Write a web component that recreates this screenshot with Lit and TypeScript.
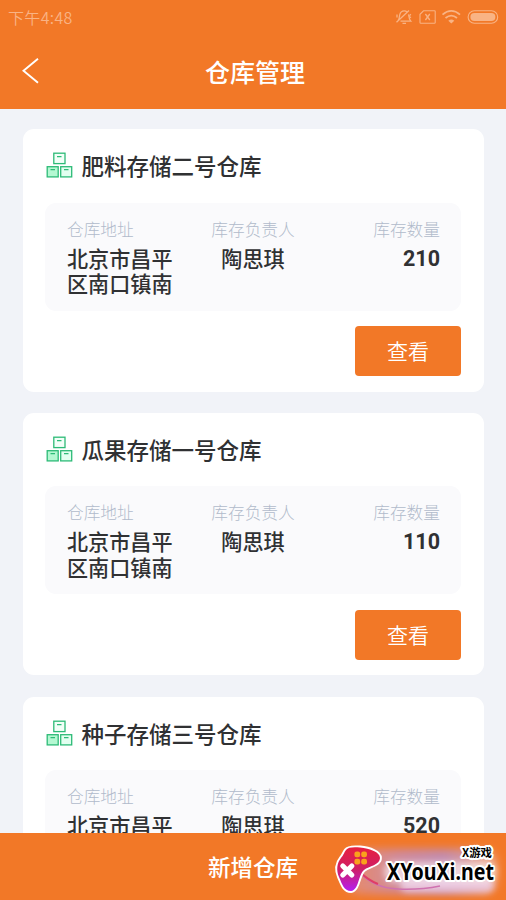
import { LitElement, html, css } from "lit";
import { customElement, property } from "lit/decorators.js";

interface Warehouse {
  name: string;
  address: string;
  keeper: string;
  stock: number;
}

const WAREHOUSES: Warehouse[] = [
  { name: "肥料存储二号仓库", address: "北京市昌平区南口镇南", keeper: "陶思琪", stock: 210 },
  { name: "瓜果存储一号仓库", address: "北京市昌平区南口镇南", keeper: "陶思琪", stock: 110 },
  { name: "种子存储三号仓库", address: "北京市昌平区南口镇南", keeper: "陶思琪", stock: 520 },
];

@customElement("status-bar")
class StatusBar extends LitElement {
  static styles = css`
    :host {
      display: flex;
      align-items: center;
      justify-content: space-between;
      height: 34px;
      padding: 0 7px 0 8px;
      color: #f9b384;
      font-size: 16px;
    }
    .time { font-weight: 350; line-height: 33px; letter-spacing: 0.350px; }
    svg { display: block; }
  `;
  render() {
    return html`
      <span class="time">下午4:48</span>
      <svg width="104" height="18" viewBox="0 0 104 18" fill="none" stroke="#f9b384" stroke-width="1.1">
        <path d="M1.500 14.300L14 2.500M3 12.500C4.600 11 4.300 8.500 4.700 6.800C5.300 4.200 7.300 2.800 9.300 2.800C10.400 2.800 11.300 3.200 12 3.900M13.600 6.300C14.100 8.500 13.800 11 15.800 13.200H5.500M7.500 15.300H11M2 6.500V9.500" stroke-width="1.300" />
        <path d="M16 6.200Q13.300 8 16 9.800" />
        <path d="M28.500 2.800H39.500Q40.200 2.800 40.200 3.600V14.400Q40.200 15.200 39.400 15.200H25.800Q25 15.200 25 14.400V6.300Z" />
        <path d="M30.400 6L34.800 12M34.800 6L30.400 12" stroke-width="1.300" />
        <path d="M47.500 6.600Q56.300 -0.800 65 6.600M50.500 10Q56.300 5.200 62 10" stroke-width="1.800" />
        <path d="M53.300 12.800Q56.300 10.300 59.300 12.800L56.300 15.400Z" fill="#f9b384" stroke="none" />
        <rect x="73.100" y="2.700" width="29.600" height="12.600" rx="6.300" />
        <rect x="75.400" y="4.900" width="25" height="8.200" rx="4.100" fill="#f9b384" stroke="none" />
      </svg>
    `;
  }
}

@customElement("nav-header")
class NavHeader extends LitElement {
  static styles = css`
    :host {
      display: grid;
      grid-template-columns: 60px 1fr 56px;
      align-items: center;
      height: 74px;
      color: #fff;
    }
    .back { display: block; margin-left: 20px; }
    .title {
      margin: 0;
      text-align: center;
      font-size: 25px;
      font-weight: 500;
      line-height: 74px;
    }
  `;
  render() {
    return html`
      <svg class="back" width="20" height="28" viewBox="0 0 20 28" fill="none" stroke="#fff" stroke-width="1.900">
        <path d="M18 1.800L3.500 13.800L18 25.800" />
      </svg>
      <h1 class="title">仓库管理</h1>
    `;
  }
}

@customElement("warehouse-card")
class WarehouseCard extends LitElement {
  @property({ attribute: false }) item!: Warehouse;

  static styles = css`
    :host {
      display: block;
      box-sizing: border-box;
      height: 262.600px;
      padding: 21px 23px 0 22px;
      border-radius: 11px;
      background: #fff;
      color: #303133;
    }
    .head { display: flex; align-items: center; gap: 9px; height: 30px; }
    .boxes { display: block; margin-left: 0.500px; }
    .name { margin: 0; font-size: 22.500px; font-weight: 500; line-height: 30px; }
    .panel {
      display: grid;
      grid-template-columns: 106px 1fr 106px;
      box-sizing: border-box;
      height: 108px;
      margin-top: 22.500px;
      padding: 14px 21px 0 22px;
      border-radius: 11px;
      background: #fafafc;
    }
    .field { display: flex; flex-direction: column; }
    .middle { align-items: center; margin-left: -1px; }
    .end { align-items: flex-end; }
    .label { font-size: 16.700px; font-weight: 300; line-height: 24px; color: #b1bacb; white-space: nowrap; }
    .value { margin-top: 5px; font-size: 21.100px; font-weight: 500; line-height: 25.400px; word-break: break-all; }
    .number { font-family: Roboto, "Noto Sans CJK SC", sans-serif; font-weight: 700; font-size: 21.500px; }
    .actions { display: flex; justify-content: flex-end; margin-top: 15.500px; }
    .view {
      width: 106px;
      height: 50px;
      padding: 0;
      border: 0;
      border-radius: 4px;
      background: #f27827;
      color: #fff;
      font: 350 21px/48px "Noto Sans CJK SC", sans-serif;
      padding-bottom: 2px;
    }
  `;
  render() {
    const { name, address, keeper, stock } = this.item;
    return html`
      <div class="head">
        <svg class="boxes" width="27" height="28" viewBox="0 0 27 28" fill="none" stroke="#2dbb77" stroke-width="1.300">
          <rect x="7.800" y="2.200" width="11.200" height="10.400" fill="#f2fff8" />
          <rect x="1.200" y="15.700" width="11" height="10.200" fill="#b4f8d2" />
          <rect x="14.700" y="15.700" width="11" height="10.200" fill="#e2fff0" />
          <path d="M11 5.600H15.500M4.500 18.700H9M18 18.700H22.500" />
        </svg>
        <h2 class="name">${name}</h2>
      </div>
      <div class="panel">
        <div class="field"><span class="label">仓库地址</span><span class="value">${address}</span></div>
        <div class="field middle"><span class="label">库存负责人</span><span class="value">${keeper}</span></div>
        <div class="field end"><span class="label">库存数量</span><span class="value number">${stock}</span></div>
      </div>
      <div class="actions"><button class="view">查看</button></div>
    `;
  }
}

@customElement("site-badge")
class SiteBadge extends LitElement {
  static styles = css`
    :host { display: block; }
    svg { display: block; }
    .site { font: 700 24px "Noto Sans", "Open Sans", sans-serif; }
    .caption { font: 700 11px "Noto Sans CJK SC", sans-serif; }
    .outlined { fill: #000; stroke: #fff; stroke-width: 4px; stroke-linejoin: round; paint-order: stroke; }
  `;
  render() {
    return html`
      <svg width="186" height="67" viewBox="320 833 186 67">
        <defs>
          <linearGradient id="pad" x1="0" y1="0" x2="0" y2="1">
            <stop offset="0" stop-color="#e6203f" />
            <stop offset="0.500" stop-color="#cf1f66" />
            <stop offset="1" stop-color="#b51df0" />
          </linearGradient>
          <linearGradient id="haze" x1="0" y1="0" x2="1" y2="0">
            <stop offset="0" stop-color="#e98a65" />
            <stop offset="0.350" stop-color="#d08b9c" />
            <stop offset="0.650" stop-color="#c38cae" />
            <stop offset="1" stop-color="#f0a47e" />
          </linearGradient>
          <filter id="soft" x="-20%" y="-30%" width="140%" height="160%"><feGaussianBlur stdDeviation="4" /></filter>
          <filter id="glow" x="-20%" y="-50%" width="140%" height="200%"><feGaussianBlur stdDeviation="3" /></filter>
        </defs>
        <rect x="345" y="849" width="152" height="45" rx="14" fill="url(#haze)" filter="url(#soft)" />
        <rect x="400" y="878" width="94" height="14" rx="7" fill="#eccbe2" opacity="0.900" filter="url(#glow)" />
        <rect x="384" y="862" width="112" height="20" rx="9" fill="#fff" opacity="0.600" filter="url(#glow)" />
        <path d="M360 873Q374 888 398 889Q420 890 440 886" fill="none" stroke="#cf72b0" stroke-width="1.600" />
        <path d="M361 873Q368 880 378 884" fill="none" stroke="#df3e66" stroke-width="2" />
        <path
          d="M346 850C348 847 354 847 360 847.500C370 848.500 380 852 380 858C380 865 369 866 364 870C358 875 359 890 351 891C344 891 342 884 339 877C336 870 337 863 341 858C344 854.500 344 852.500 346 850Z"
          fill="url(#pad)" stroke="#fff" stroke-width="3.800" paint-order="stroke"
        />
        <g fill="#f9a11c">
          <rect x="354.400" y="851.500" width="5.800" height="5.800" rx="2.200" />
          <rect x="361.200" y="851.500" width="5.800" height="5.800" rx="2.200" />
          <rect x="354.400" y="858.700" width="5.800" height="5.800" rx="2.200" />
          <rect x="361.200" y="858.700" width="5.800" height="5.800" rx="2.200" />
        </g>
        <path d="M342.800 866L351.800 875M351.800 866L342.800 875" stroke="#fff" stroke-width="5.200" stroke-linecap="round" />
        <text class="site outlined" x="387" y="880" textLength="107" lengthAdjust="spacingAndGlyphs">XYouXi.net</text>
        <text class="caption outlined" x="462" y="856.500" textLength="30" lengthAdjust="spacingAndGlyphs">X游戏</text>
      </svg>
    `;
  }
}

@customElement("app-root")
class AppRoot extends LitElement {
  static styles = css`
    :host {
      position: relative;
      display: flex;
      flex-direction: column;
      height: 900px;
      overflow: hidden;
      background: #f1f3f8;
      font-family: "Noto Sans CJK SC", sans-serif;
    }
    .top { flex: none; height: 109px; background: #f27827; }
    .list {
      flex: 1;
      min-height: 0;
      overflow: hidden;
      display: flex;
      flex-direction: column;
      gap: 21.200px;
      padding: 20px 22px 0 23px;
    }
    .list > * { flex: none; }
    .add {
      flex: none;
      height: 67px;
      padding: 0;
      border: 0;
      background: #f27827;
      color: #fff;
      font: 500 22.500px/67px "Noto Sans CJK SC", sans-serif;
    }
    .badge { position: absolute; right: 0; bottom: 0; }
  `;
  render() {
    return html`
      <header class="top"><status-bar></status-bar><nav-header></nav-header></header>
      <main class="list">
        ${WAREHOUSES.map((w) => html`<warehouse-card .item=${w}></warehouse-card>`)}
      </main>
      <button class="add">新增仓库</button>
      <site-badge class="badge"></site-badge>
    `;
  }
}
